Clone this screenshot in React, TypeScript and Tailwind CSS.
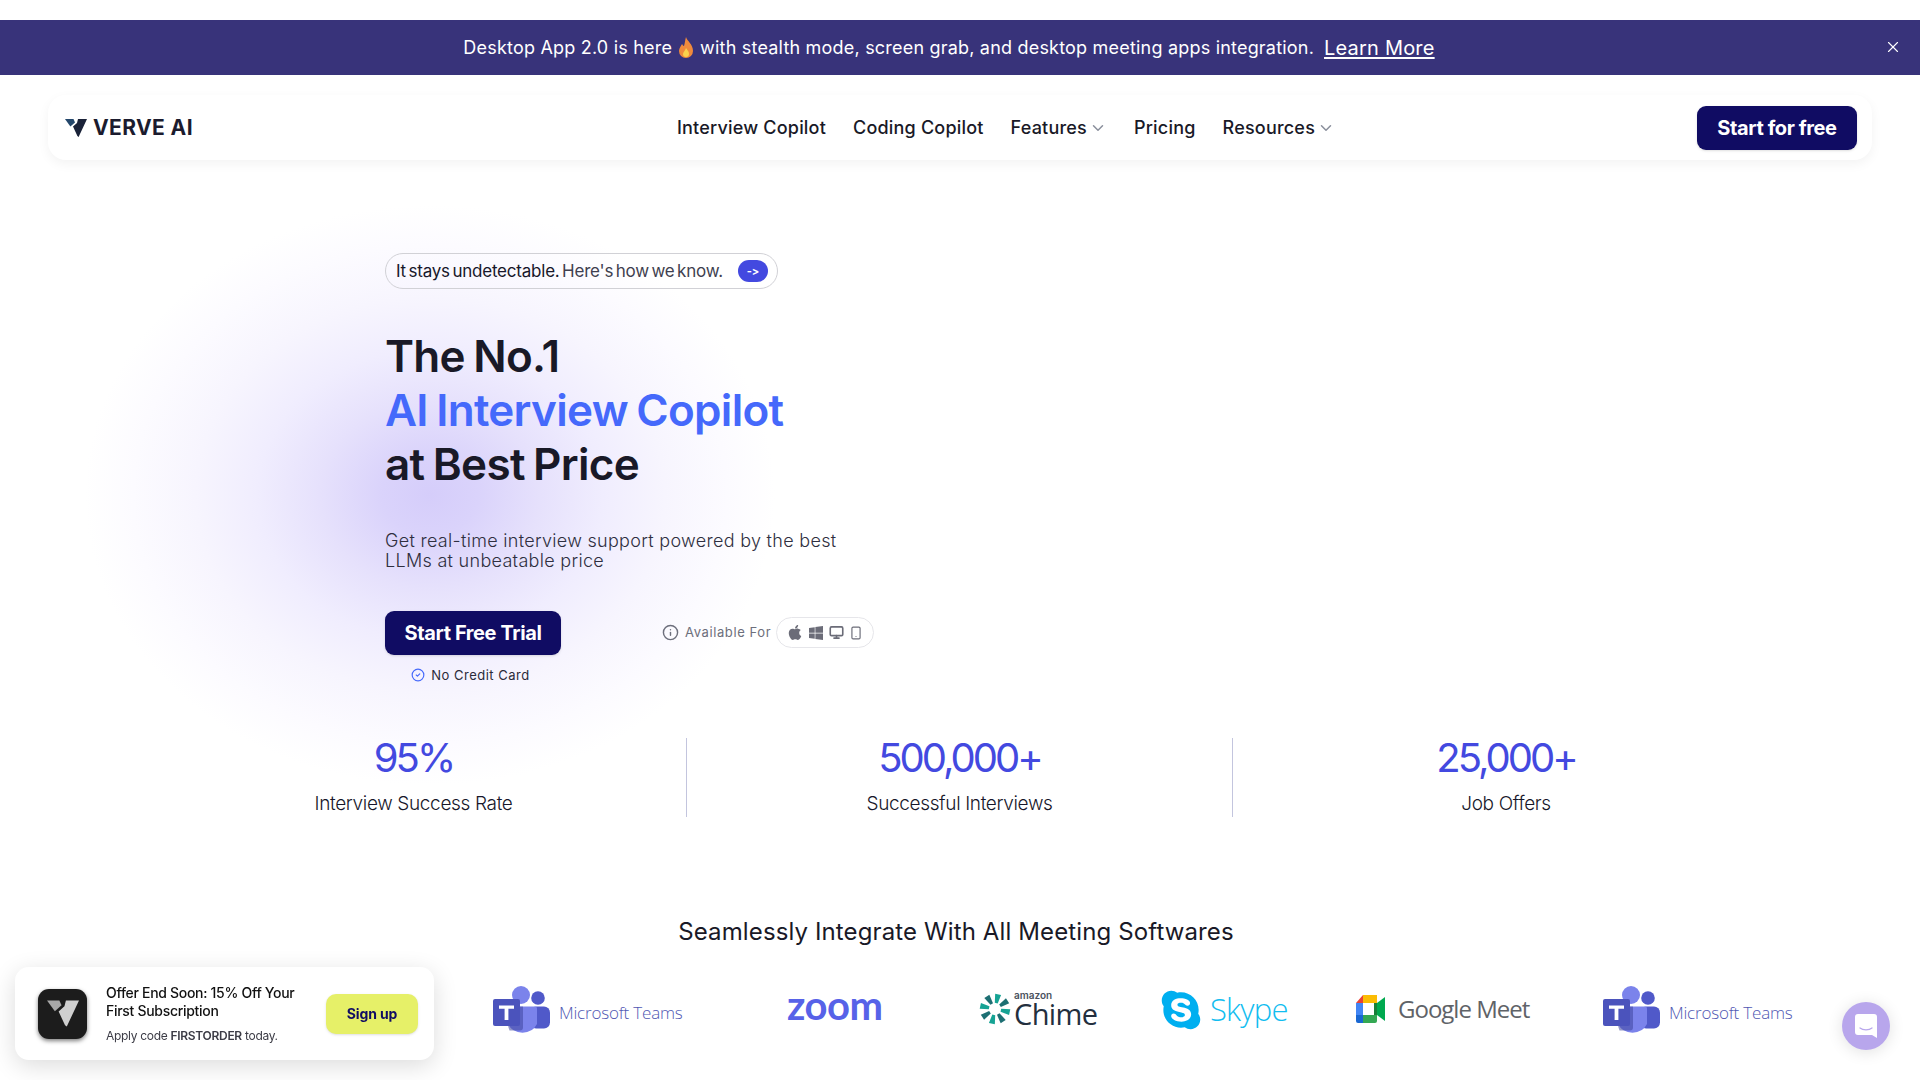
import { ChevronDown, CircleCheck, Info, Monitor, Smartphone, X } from "lucide-react";
import { FaApple, FaSkype, FaWindows } from "react-icons/fa";

// Small V mark used in the nav and in the offer card
function VerveMark({ className, fill, accent }: { className: string; fill: string; accent: string }) {
  return (
    <svg viewBox="0 0 22 18" className={className}>
      <path d="M0 0h8.5L10 3.4 5.4 7.4z" fill={accent} />
      <path d="M13 0h9l-8.4 18-1.2-1L8 7.6 12 4z" fill={fill} />
    </svg>
  );
}

function TeamsLogo({ className }: { className: string }) {
  return (
    <div className={`flex w-[190px] items-center ${className}`}>
      <svg viewBox="0 0 57 53" className="h-[53px] w-[57px] shrink-0">
        <circle cx="45" cy="12" r="6.8" fill="#5059c9" />
        <rect x="37" y="20.5" width="20" height="22" rx="6" fill="#5059c9" />
        <circle cx="28" cy="9" r="9" fill="#7b83eb" />
        <path d="M15 20.5h27a2 2 0 0 1 2 2V38a16 15 0 0 1-29 0z" fill="#7b83eb" />
        <path d="M15 20.5h15v21a3 3 0 0 1-3 3H16.500A16 15 0 0 1 15 38z" fill="#3f469f" opacity="0.55" />
        <rect x="0" y="13" width="27" height="27" rx="2" fill="#4b53bc" />
        <path d="M6 19.500h15v3.300h-5.600V34h-3.800V22.800H6z" fill="#fff" />
      </svg>
      <span className="ml-[9px] font-['Open_Sans',sans-serif] text-[17px] font-light whitespace-nowrap tracking-[-0.2px] text-[#4f57b3]">
        Microsoft Teams
      </span>
    </div>
  );
}

function ChimeBurst() {
  const blades = [0, 45, 90, 135, 180, 225, 270, 315];
  return (
    <svg viewBox="0 0 32 32" className="h-[32px] w-[32px] shrink-0">
      {blades.map((angle, i) => (
        <path
          key={angle}
          d="M14.500 10 L13 1 L19 1 L17.500 10 Z"
          fill={i % 2 === 0 ? "#16a394" : "#1d6f73"}
          transform={`rotate(${angle + 12} 16 16)`}
        />
      ))}
    </svg>
  );
}

function MeetIcon() {
  return (
    <svg viewBox="0 0 29 28" className="h-[28px] w-[29px] shrink-0">
      <path d="M7 0h14v8H7z" fill="#fbbc04" />
      <path d="M7 0v8H0z" fill="#ea4335" />
      <path d="M0 8h7v12H0z" fill="#4285f4" />
      <path d="M0 20h7v8H2a2 2 0 0 1-2-2z" fill="#1967d2" />
      <path d="M7 20h14v6a2 2 0 0 1-2 2H7z" fill="#34a853" />
      <path d="M21 8l8-6v24l-8-6z" fill="#00a94f" />
      <path d="M19 3v3h2V2a2 2 0 0 0-2-2z" fill="#fbbc04" />
      <path d="M21 8v12h-3V8z" fill="#188038" />
    </svg>
  );
}

function Stat({ value, label, divided }: { value: string; label: string; divided?: boolean }) {
  return (
    <div className={`flex h-[79px] w-[546px] flex-col items-center ${divided ? "border-r border-[#c3c5de]" : ""}`}>
      <div className="text-[40px] leading-[40px] font-normal tracking-[-3px] text-[#4349e0]">{value}</div>
      <div className="mt-[13px] text-[19px] leading-[26px] font-light tracking-[-0.35px] text-[#17172a]">{label}</div>
    </div>
  );
}

export default function App() {
  return (
    <div className="relative h-screen overflow-hidden bg-white font-['Inter',sans-serif] text-[#191927]">
      {/* Purple glow behind the hero */}
      <div className="absolute top-[205px] left-[85px] h-[580px] w-[690px] bg-[radial-gradient(closest-side,#d5cdfa_0%,#dad3fb_14%,#e6e1fc_32%,#f0edfe_50%,#f7f5fe_68%,#fcfbff_86%,#ffffff_100%)]" />

      <div className="relative">
        {/* Announcement bar */}
        <div className="relative mt-[20px] flex h-[55px] items-center justify-center bg-[#38337a] text-white">
          <div className="relative left-[-11px] flex items-center text-[18px] tracking-[0.2px]">
            <span>Desktop App 2.0 is here</span>
            <svg viewBox="0 0 16 22" className="mx-[6px] h-[22px] w-[16px]">
              <path d="M8 0c1 4 7 7 7 14a7 7 0 0 1-14 0c0-3 2-5 3-7 1 1 1 2 2 2 1-3 1-6 2-9z" fill="#f08a3c" />
              <path d="M8 11c1 2 3 3 3 6a3 3 0 0 1-6 0c0-2 2-3 3-6z" fill="#fbd24c" />
            </svg>
            <span>with stealth mode, screen grab, and desktop meeting apps integration.</span>
            <a className="ml-[10px] text-[20px] underline underline-offset-2">Learn More</a>
          </div>
          <X className="absolute top-[18px] right-[18px] h-[18px] w-[18px] text-white" strokeWidth={1.5} />
        </div>

        {/* Nav */}
        <div className="mt-[20px] ml-[48px] flex h-[65px] w-[1824px] items-center justify-between rounded-[18px] bg-white pr-[15px] pl-[17px] shadow-[0_4px_12px_rgba(0,0,0,0.05)]">
          <div className="flex w-[300px] items-center gap-[6px]">
            <VerveMark className="h-[18px] w-[22px]" fill="#1a2238" accent="#24476b" />
            <span className="text-[21px] font-bold tracking-[0.4px] text-[#1b1b2e]">VERVE AI</span>
          </div>
          <nav className="relative left-[-25px] flex items-center gap-[27px] text-[18px] font-medium tracking-[0.2px]">
            <span>Interview Copilot</span>
            <span>Coding Copilot</span>
            <span className="flex items-center">
              Features
              <ChevronDown className="ml-[2px] h-[18px] w-[18px] text-[#8a8f9c]" />
            </span>
            <span>Pricing</span>
            <span className="flex items-center">
              Resources
              <ChevronDown className="ml-[2px] h-[18px] w-[18px] text-[#8a8f9c]" />
            </span>
          </nav>
          <button className="h-[44px] w-[160px] rounded-[9px] bg-[#100c63] text-[20px] font-bold tracking-[-0.4px] text-white shadow-sm">
            Start for free
          </button>
        </div>

        {/* Hero */}
        <div className="pl-[385px]">
          <div className="mt-[93px] flex h-[36px] w-[393px] items-center justify-between rounded-full border border-[#d1d1d6] pr-[9px] pl-[10px]">
            <span className="text-[17px] leading-[26px] whitespace-nowrap tracking-[-0.22px] text-[#3f3f50] [word-spacing:-2px]">
              <span className="text-[#17172a]">It stays undetectable.</span> Here's how we know.
            </span>
            <span className="flex h-[22px] w-[30px] items-center justify-center rounded-full bg-[#4349e0] text-[11px] leading-none font-bold text-white [font-variant-ligatures:none]">
              -&gt;
            </span>
          </div>
          <h1 className="mt-[40px] text-[44px] leading-[54px] font-semibold tracking-[-0.7px] text-[#191927] [word-spacing:-2px]">
            The No.1
            <br />
            <span className="text-[#4569fb]">AI Interview Copilot</span>
            <br />
            at Best Price
          </h1>
          <p className="mt-[40px] text-[18px] leading-[20px] font-light tracking-[0.3px] text-[#2f2f40]">
            Get real-time interview support powered by the best
            <br />
            LLMs at unbeatable price
          </p>
          <div className="mt-[40px] flex items-start">
            <div className="flex w-[176px] flex-col items-center">
              <button className="h-[44px] w-[176px] rounded-[9px] bg-[#100c63] text-[20px] font-bold tracking-[-0.4px] text-white shadow-sm">
                Start Free Trial
              </button>
              <div className="mt-[11px] mr-[5px] flex items-center gap-[6px] text-[13px] leading-[18px] tracking-[0.5px] text-[#2b2b3a]">
                <CircleCheck className="h-[14px] w-[14px] text-[#4569fb]" />
                No Credit Card
              </div>
            </div>
            <div className="mt-[6px] ml-[101px] flex items-center text-[#6d6f7c]">
              <Info className="h-[17px] w-[17px]" />
              <span className="mr-[5px] ml-[6px] text-[13px] tracking-[0.6px]">Available For</span>
              <div className="flex h-[31px] w-[98px] items-center justify-center gap-[5px] rounded-full border border-[#e6e6ea] text-[#6b6c78]">
                <FaApple className="h-[17px] w-[16px]" />
                <FaWindows className="h-[16px] w-[16px]" />
                <Monitor className="h-[15px] w-[15px]" strokeWidth={2.6} />
                <Smartphone className="h-[16px] w-[14px]" />
              </div>
            </div>
          </div>
        </div>

        {/* Stats */}
        <div className="mt-[54px] ml-[141px] flex">
          <Stat value="95%" label="Interview Success Rate" divided />
          <Stat value="500,000+" label="Successful Interviews" divided />
          <Stat value="25,000+" label="Job Offers" />
        </div>

        {/* Integrations */}
        <h2 className="mt-[99px] pr-[8px] text-center text-[24px] leading-[32px] font-normal tracking-[0.12px] text-[#191927]">
          Seamlessly Integrate With All Meeting Softwares
        </h2>
        <div className="mt-[38px] flex h-[53px] items-center">
          <TeamsLogo className="ml-[493px]" />
          <span className="mb-[15px] ml-[104px] w-[96px] font-['Lato',sans-serif] text-[40px] leading-none font-bold tracking-[-0.5px] text-[#5762e8]">
            zoom
          </span>
          <div className="mb-[8px] ml-[96px] flex w-[118px] items-center">
            <ChimeBurst />
            <div className="ml-[3px] flex flex-col">
              <span className="text-[10px] leading-[11px] font-semibold text-[#4a5260]">amazon</span>
              <span className="font-['Open_Sans',sans-serif] text-[29px] leading-[26px] tracking-[-0.6px] text-[#232f3e]">Chime</span>
            </div>
          </div>
          <div className="mb-[6px] ml-[62px] flex w-[129px] items-center">
            <FaSkype className="h-[44px] w-[44px] shrink-0 text-[#00aff0]" />
            <span className="ml-[7px] font-['Open_Sans',sans-serif] text-[31px] font-light tracking-[-0.8px] text-[#12bdf0]">Skype</span>
          </div>
          <div className="mb-[8px] ml-[68px] flex w-[174px] items-center">
            <MeetIcon />
            <span className="ml-[13px] font-['Open_Sans',sans-serif] text-[24px] whitespace-nowrap tracking-[-1px] text-[#5f6368]">Google Meet</span>
          </div>
          <TeamsLogo className="ml-[73px]" />
        </div>
      </div>

      {/* Offer popup */}
      <div className="fixed top-[967px] left-[15px] flex h-[93px] w-[419px] items-center rounded-[14px] bg-white pr-[16px] pl-[23px] shadow-[0_6px_24px_rgba(0,0,0,0.14)]">
        <div className="flex h-[50px] w-[49px] shrink-0 items-center justify-center rounded-[11px] bg-[#1c1c1c] shadow-[0_2px_4px_rgba(0,0,0,0.5)]">
          <VerveMark className="h-[27px] w-[32px]" fill="#cfcfcf" accent="#a8a8a8" />
        </div>
        <div className="ml-[19px] w-[200px]">
          <div className="text-[14px] leading-[18px] font-medium tracking-[-0.3px] text-[#111]">
            Offer End Soon: 15% Off Your First Subscription
          </div>
          <div className="mt-[8px] text-[12px] leading-[16px] tracking-[-0.3px] text-[#3c3c46]">
            Apply code <span className="font-semibold">FIRSTORDER</span> today.
          </div>
        </div>
        <button className="ml-auto h-[40px] w-[92px] rounded-[10px] bg-[#e6f068] text-[14px] font-bold tracking-[-0.1px] text-[#100c63] shadow-sm">
          Sign up
        </button>
      </div>

      {/* Chat launcher */}
      <div className="fixed top-[1002px] left-[1842px] flex h-[48px] w-[48px] items-center justify-center rounded-full bg-[#b8a6ec] shadow-[0_2px_16px_rgba(0,0,0,0.12)]">
        <svg viewBox="0 0 24 26" className="h-[26px] w-[24px]">
          <path d="M4 1h16a3 3 0 0 1 3 3v21l-5-3H4a3 3 0 0 1-3-3V4a3 3 0 0 1 3-3z" fill="#fff" />
          <path d="M6 15c3 2.500 9 2.500 12 0" stroke="#b8a6ec" strokeWidth="1.200" fill="none" strokeLinecap="round" />
        </svg>
      </div>
    </div>
  );
}
